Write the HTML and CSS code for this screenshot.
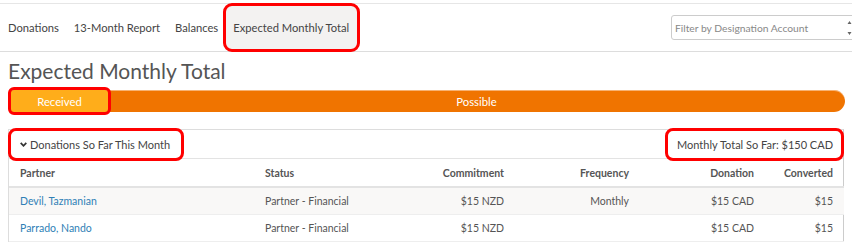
FILE: index.html
```html
<!DOCTYPE html>
<html>
<head>
    <title>Expected Monthly Total</title>
    <link rel="stylesheet" href="styles.css">
</head>
<body>
    <div id="topnav">
        <a class="nav-item" href="#">Donations</a>
        <a class="nav-item" href="#">13-Month Report</a>
        <a class="nav-item" href="#">Balances</a>
        <a class="nav-item active" href="#">Expected Monthly Total</a>
        <div class="filter">
            <input type="text" placeholder="Filter by Designation Account">
            <span class="spin">
                <svg width="5" height="18" viewBox="0 0 5 18"><path d="M0.5 5 L2.5 2 L4.5 5 Z M0.5 13 L2.5 16 L4.5 13 Z" fill="#666"/></svg>
            </span>
        </div>
    </div>

    <h1 class="page-title">Expected Monthly Total</h1>

    <div class="progress">
        <div class="bar-received">Received</div>
        <div class="bar-possible">Possible</div>
    </div>

    <div class="panel">
        <div class="panel-heading">
            <span class="callout">
                <svg class="chevron" width="7" height="5" viewBox="0 0 7 5"><path d="M0.7 0.8 L3.5 3.8 L6.3 0.8" fill="none" stroke="#333" stroke-width="1.7"/></svg>
                Donations So Far This Month
            </span>
            <span class="callout">Monthly Total So Far: $150 CAD</span>
        </div>
        <table class="donations">
            <colgroup>
                <col style="width: 245px">
                <col style="width: 130px">
                <col style="width: 131px">
                <col style="width: 125px">
                <col style="width: 125px">
                <col style="width: 79px">
            </colgroup>
            <thead>
                <tr>
                    <th>Partner</th>
                    <th>Status</th>
                    <th class="num">Commitment</th>
                    <th class="num">Frequency</th>
                    <th class="num">Donation</th>
                    <th class="num">Converted</th>
                </tr>
            </thead>
            <tbody>
                <tr>
                    <td><a href="#">Devil, Tazmanian</a></td>
                    <td>Partner - Financial</td>
                    <td class="num">$15 NZD</td>
                    <td class="num">Monthly</td>
                    <td class="num">$15 CAD</td>
                    <td class="num">$15</td>
                </tr>
                <tr>
                    <td><a href="#">Parrado, Nando</a></td>
                    <td>Partner - Financial</td>
                    <td class="num">$15 NZD</td>
                    <td class="num"></td>
                    <td class="num">$15 CAD</td>
                    <td class="num">$15</td>
                </tr>
            </tbody>
        </table>
    </div>
</body>
</html>
```

FILE: styles.css
```css
* {
    box-sizing: border-box;
}

body {
    margin: 0;
    font-family: Lato, "Liberation Sans", sans-serif;
    color: #555;
    background: #fff;
    overflow: hidden;
}

#topnav {
    display: flex;
    align-items: center;
    height: 49px;
    margin-top: 3px;
    padding-left: 0.5px;
    border-top: 1px solid #e6e6e6;
    border-bottom: 1px solid #ddd;
}

.nav-item {
    padding: 0 7.5px;
    font-size: 11.2px;
    color: #444;
    text-decoration: none;
}

.nav-item.active {
    display: flex;
    align-items: center;
    align-self: stretch;
    margin: -1px 0 -1px -2.5px;
    padding: 0 8px 0 7px;
    background-color: #f3f2f1;
    border: 3px solid #f00;
    border-radius: 9px;
}

.filter {
    display: flex;
    align-items: center;
    flex-shrink: 0;
    margin-left: auto;
    margin-right: -4px;
    width: 185px;
    height: 25px;
    border: 1px solid #ccc;
    border-radius: 3px;
    overflow: hidden;
}

.filter input {
    flex: none;
    width: 175px;
    border: none;
    padding: 0 3px;
    font-family: inherit;
    font-size: 10.3px;
    background: transparent;
}

.filter input::placeholder {
    color: #888;
}

.spin {
    display: flex;
    flex: none;
    width: 8px;
}

.page-title {
    margin: 6px 0 6px 8px;
    font-size: 21px;
    line-height: 26px;
    font-weight: 400;
    color: #555;
}

.progress {
    display: flex;
    height: 22px;
    margin: 0 7px 0 11px;
    border-radius: 0 11px 11px 0;
    background-color: #f07400;
    box-shadow: inset 0 1px 0 rgba(255, 255, 255, 0.45);
    font-size: 11.3px;
    color: #fff;
}

.bar-received,
.bar-possible {
    display: flex;
    align-items: center;
    justify-content: center;
}

.bar-received {
    width: 97px;
    background-color: #ffad1a;
    outline: 3px solid #f00;
    border-radius: 3px;
}

.bar-possible {
    flex: 1;
}

.panel {
    margin: 17px 8px 0 8px;
    border: 1px solid #ddd;
    border-right-color: #ccc;
}

.panel-heading {
    display: flex;
    justify-content: space-between;
    align-items: center;
    height: 29px;
    border-bottom: 1px solid #e3e3e3;
    font-size: 11px;
    color: #444;
}

.callout {
    display: flex;
    align-items: center;
    flex-shrink: 0;
    height: 33px;
    padding: 0 8px 0 9px;
    border: 3px solid #f00;
    border-radius: 8px;
}

.callout:first-child {
    margin-left: -1px;
    padding-right: 11px;
}

.callout:last-child {
    margin-right: -1px;
}

.chevron {
    margin-right: 3px;
}

.donations {
    width: 100%;
    table-layout: fixed;
    border-collapse: collapse;
    font-size: 10.5px;
}

.donations th,
.donations td {
    padding: 0 11px;
    text-align: left;
    white-space: nowrap;
}

.donations th {
    height: 28px;
    font-weight: 700;
    color: #555;
    border-bottom: 2px solid #e3e3e3;
}

.donations td {
    height: 27px;
    color: #555;
    border-bottom: 1px solid #eee;
}

.donations tbody tr:nth-child(odd) {
    background-color: #f9f8f7;
}

.donations .num {
    text-align: right;
}

.donations a {
    color: #2f7fb6;
    text-decoration: none;
}
```
